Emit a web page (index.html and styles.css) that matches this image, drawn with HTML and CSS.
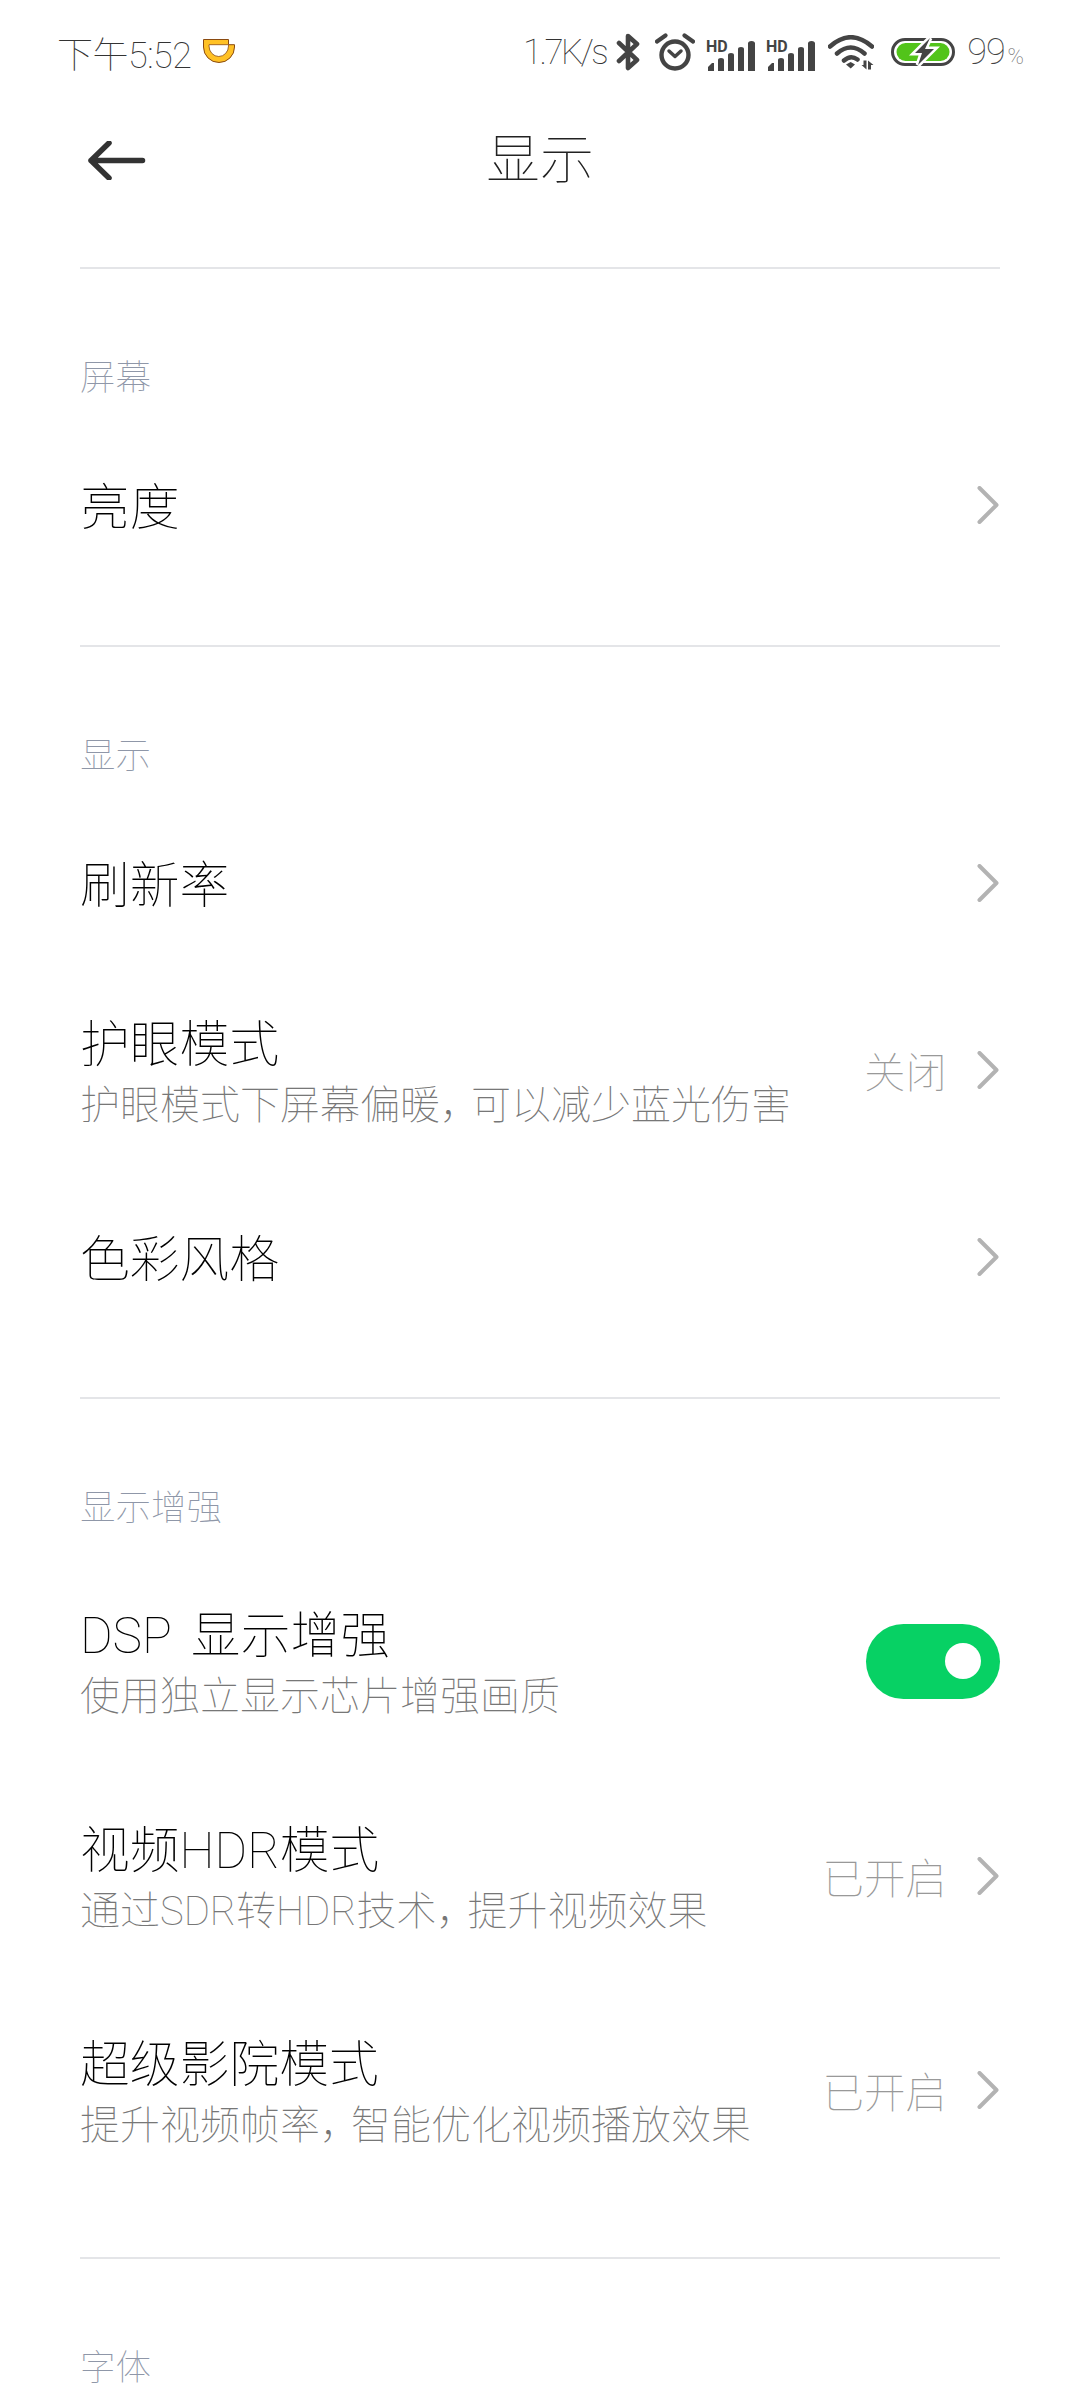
FILE: index.html
```html
<!DOCTYPE html>
<html lang="zh-CN">
<head>
    <meta charset="UTF-8">
    <meta name="viewport" content="width=device-width, initial-scale=1.0">
    <title>显示</title>
    <link rel="stylesheet" href="styles.css">
</head>
<body>
    <div class="status-bar">
        <div class="status-left">
            <span class="clock">下午5:52</span>
            <svg class="app-icon" width="32" height="24" viewBox="0 0 32 24">
                <path d="M.5 .5H25.500V5.700H31.500V8A15.500 15.500 0 0 1 .5 8Z" fill="#ffc125" stroke="#8a4a10" stroke-width="1"/>
                <path d="M6 5.700H25.500V7A9.750 10.500 0 0 1 6 7Z" fill="#fff" stroke="#8a4a10" stroke-width=".8"/>
            </svg>
        </div>
        <div class="status-right">
            <span class="speed">1.7K/s</span>
            <svg class="ic-bt" width="24" height="38" viewBox="0 0 24 38">
                <path d="M3 10L21 27L12 35V3L21 11L3 28" fill="none" stroke="#444" stroke-width="4.600" stroke-linejoin="round" stroke-linecap="round"/>
            </svg>
            <svg class="ic-alarm" width="40" height="38" viewBox="0 0 40 38">
                <circle cx="20" cy="22" r="13.500" fill="none" stroke="#444" stroke-width="4.400"/>
                <path d="M14 18L20 23.500L26 18" fill="none" stroke="#444" stroke-width="3.500" stroke-linecap="round" stroke-linejoin="round"/>
                <path d="M2 8.500L10.500 2.500M38 8.500L29.500 2.500" fill="none" stroke="#444" stroke-width="4.200" stroke-linecap="round"/>
            </svg>
            <svg class="ic-signal" width="49" height="36" viewBox="0 -4 49 36">
                <text x="0" y="12" class="hd">HD</text>
                <path d="M2 31V27L6 23H8V31ZM12 31V20Q12 18 15 18T18 20V31ZM22 31V15Q22 13 25 13T28 15V31ZM32 31V9Q32 7 35 7T38 9V31ZM42 31V3.500Q42 1 45.500 1T49 3.500V31Z" fill="#444"/>
            </svg>
            <svg class="ic-signal" width="49" height="36" viewBox="0 -4 49 36">
                <text x="0" y="12" class="hd">HD</text>
                <path d="M2 31V27L6 23H8V31ZM12 31V20Q12 18 15 18T18 20V31ZM22 31V15Q22 13 25 13T28 15V31ZM32 31V9Q32 7 35 7T38 9V31ZM42 31V3.500Q42 1 45.500 1T49 3.500V31Z" fill="#444"/>
            </svg>
            <svg class="ic-wifi" width="46" height="35" viewBox="0 0 46 35">
                <path d="M2 11.500Q22.700 -7 44 11.500M9 18.500Q22.700 6.500 36.500 18.500M16 25.500Q22.700 19.500 29.500 24.500" fill="none" stroke="#444" stroke-width="4.500" stroke-linecap="round"/>
                <path d="M18 29.500L22.700 27L27 29.500L22.700 33.500Z" fill="#444"/>
                <path d="M33.500 30H35.500V25.500H38.500V34.500ZM40 25.500V34.500H43V30H45.500Z" fill="#444"/>
            </svg>
            <svg class="ic-battery" width="64" height="28" viewBox="0 0 64 28">
                <rect x="1.500" y="1.500" width="61" height="25" rx="12.500" fill="none" stroke="#444" stroke-width="3"/>
                <rect x="5.500" y="5" width="53" height="18" rx="9" fill="#52c41a"/>
                <path d="M39 0L24 15H31L27 27L43 11H34Z" fill="#fff" stroke="#fff" stroke-width="5"/>
                <path d="M39 0L24 15H31L27 27L43 11H34Z" fill="#444"/>
            </svg>
            <span class="battery-num">99</span><span class="battery-pct">%</span>
        </div>
    </div>

    <div class="title-bar">
        <svg class="back" width="59" height="39" viewBox="0 0 59 39">
            <path d="M54.500 19.500H3M21 2L3 19.500L21 37" fill="none" stroke="#333" stroke-width="5.500" stroke-linecap="round" stroke-linejoin="round"/>
        </svg>
        <h1>显示</h1>
    </div>

    <div class="section">
        <div class="section-label">屏幕</div>
        <div class="row">
            <div class="row-text"><div class="row-title">亮度</div></div>
            <svg class="chevron" width="22" height="38" viewBox="0 0 22 38"><path d="M2.500 2L19.500 19L2.500 36" fill="none" stroke="#b3b3b3" stroke-width="4" stroke-linecap="round" stroke-linejoin="round"/></svg>
        </div>
    </div>

    <div class="section">
        <div class="section-label">显示</div>
        <div class="row">
            <div class="row-text"><div class="row-title">刷新率</div></div>
            <svg class="chevron" width="22" height="38" viewBox="0 0 22 38"><path d="M2.500 2L19.500 19L2.500 36" fill="none" stroke="#b3b3b3" stroke-width="4" stroke-linecap="round" stroke-linejoin="round"/></svg>
        </div>
        <div class="row row-mid">
            <div class="row-text">
                <div class="row-title">护眼模式</div>
                <div class="row-sub">护眼模式下屏幕偏暖<span class="comma">，</span>可以减少蓝光伤害</div>
            </div>
            <span class="row-value">关闭</span>
            <svg class="chevron" width="22" height="38" viewBox="0 0 22 38"><path d="M2.500 2L19.500 19L2.500 36" fill="none" stroke="#b3b3b3" stroke-width="4" stroke-linecap="round" stroke-linejoin="round"/></svg>
        </div>
        <div class="row">
            <div class="row-text"><div class="row-title">色彩风格</div></div>
            <svg class="chevron" width="22" height="38" viewBox="0 0 22 38"><path d="M2.500 2L19.500 19L2.500 36" fill="none" stroke="#b3b3b3" stroke-width="4" stroke-linecap="round" stroke-linejoin="round"/></svg>
        </div>
    </div>

    <div class="section">
        <div class="section-label">显示增强</div>
        <div class="row row-tall">
            <div class="row-text">
                <div class="row-title">DSP 显示增强</div>
                <div class="row-sub">使用独立显示芯片增强画质</div>
            </div>
            <div class="toggle"><span class="knob"></span></div>
        </div>
        <div class="row row-tall">
            <div class="row-text">
                <div class="row-title">视频HDR模式</div>
                <div class="row-sub">通过SDR转HDR技术<span class="comma">，</span>提升视频效果</div>
            </div>
            <span class="row-value">已开启</span>
            <svg class="chevron" width="22" height="38" viewBox="0 0 22 38"><path d="M2.500 2L19.500 19L2.500 36" fill="none" stroke="#b3b3b3" stroke-width="4" stroke-linecap="round" stroke-linejoin="round"/></svg>
        </div>
        <div class="row row-tall">
            <div class="row-text">
                <div class="row-title">超级影院模式</div>
                <div class="row-sub">提升视频帧率<span class="comma">，</span>智能优化视频播放效果</div>
            </div>
            <span class="row-value">已开启</span>
            <svg class="chevron" width="22" height="38" viewBox="0 0 22 38"><path d="M2.500 2L19.500 19L2.500 36" fill="none" stroke="#b3b3b3" stroke-width="4" stroke-linecap="round" stroke-linejoin="round"/></svg>
        </div>
    </div>

    <div class="section">
        <div class="section-label">字体</div>
    </div>
</body>
</html>
```

FILE: styles.css
```css
html, body {
    margin: 0;
    padding: 0;
}

body {
    width: 1080px;
    height: 2400px;
    overflow: hidden;
    background: #fff;
    color: #000;
    font-family: "Roboto", "Noto Sans CJK SC", sans-serif;
    font-weight: 100;
}

.status-bar {
    height: 104px;
    padding: 0 56px 0 57px;
    box-sizing: border-box;
    display: flex;
    justify-content: space-between;
    align-items: center;
}

.status-left,
.status-right {
    display: flex;
    align-items: center;
}

.clock {
    font-size: 36px;
    letter-spacing: -.5px;
    color: #333;
}

.app-icon {
    margin-left: 11px;
    margin-top: -2px;
}

.speed {
    font-size: 35px;
    letter-spacing: -2.600px;
    color: #333;
    margin-right: 10px;
}

.ic-alarm {
    margin-left: 15px;
}

.ic-signal {
    margin-left: 11px;
    margin-top: 4px;
}

.ic-wifi {
    margin-left: 13px;
}

.ic-battery {
    margin-left: 17px;
}

.hd {
    font-family: "Roboto", sans-serif;
    font-size: 16px;
    font-weight: 700;
    fill: #444;
}

.battery-num {
    font-size: 36px;
    letter-spacing: -1px;
    color: #444;
    margin-left: 12px;
}

.battery-pct {
    font-size: 22px;
    color: #666;
    margin-left: 3px;
    margin-top: 9px;
}

.title-bar {
    height: 163px;
    margin: 0 80px;
    padding-bottom: 60px;
    box-sizing: border-box;
    display: flex;
    align-items: center;
    justify-content: center;
    position: relative;
}

.title-bar h1 {
    margin: 0;
    font-size: 54px;
    font-weight: 100;
    color: #222;
}

.back {
    position: absolute;
    left: 8px;
    top: 37px;
}

.section {
    margin: 0 80px;
    padding-bottom: 59px;
    border-top: 2px solid #e4e5e8;
}

.section-label {
    height: 155px;
    padding-top: 91px;
    box-sizing: border-box;
    font-size: 35.500px;
    line-height: 36px;
    color: #8f97a8;
}

.row {
    height: 162px;
    display: flex;
    align-items: center;
}

.row-mid {
    height: 212px;
}

.row-tall {
    height: 214.600px;
}

.row-text {
    flex: 1;
    padding-top: 6px;
}

.row-mid .row-text,
.row-tall .row-text {
    padding-top: 10px;
}

.row-title {
    font-size: 49.800px;
    line-height: 62px;
    word-spacing: 7px;
}

.row-sub {
    font-size: 40px;
    line-height: 60px;
    color: #777;
}

.comma {
    letter-spacing: -9px;
}

.row-value {
    font-size: 41.500px;
    color: #999;
    margin-right: 30px;
}

.chevron {
    margin-right: 1px;
}

.toggle {
    width: 134px;
    height: 75px;
    padding: 0 19px;
    box-sizing: border-box;
    border-radius: 38px;
    background: #07d164;
    display: flex;
    align-items: center;
    justify-content: flex-end;
}

.knob {
    width: 36px;
    height: 36px;
    border-radius: 50%;
    background: #fff;
}
```
